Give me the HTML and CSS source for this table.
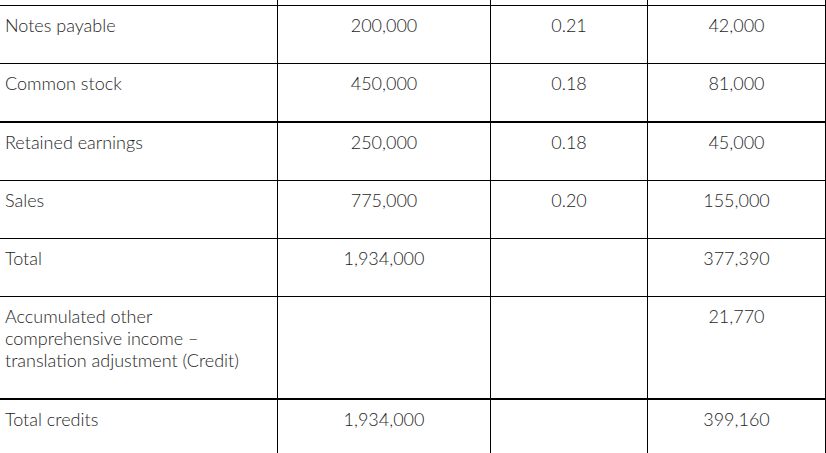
FILE: index.html
```html
<!DOCTYPE html>
<html lang="en">
<head>
<meta charset="utf-8">
<title>Translation worksheet</title>
<link rel="stylesheet" href="styles.css">
</head>
<body>
<table class="sheet">
  <colgroup>
    <col class="c1">
    <col class="c2">
    <col class="c3">
    <col class="c4">
  </colgroup>
  <tbody>
    <tr class="spacer"><td></td><td></td><td></td><td></td></tr>
    <tr><td class="label">Notes payable</td><td class="num">200,000</td><td class="num">0.21</td><td class="num">42,000</td></tr>
    <tr class="thick"><td class="label">Common stock</td><td class="num">450,000</td><td class="num">0.18</td><td class="num">81,000</td></tr>
    <tr><td class="label">Retained earnings</td><td class="num">250,000</td><td class="num">0.18</td><td class="num">45,000</td></tr>
    <tr><td class="label">Sales</td><td class="num">775,000</td><td class="num">0.20</td><td class="num">155,000</td></tr>
    <tr><td class="label">Total</td><td class="num">1,934,000</td><td class="num"></td><td class="num">377,390</td></tr>
    <tr class="thick"><td class="label">Accumulated other<br>comprehensive income –<br>translation adjustment (Credit)</td><td class="num"></td><td class="num"></td><td class="num">21,770</td></tr>
    <tr><td class="label">Total credits</td><td class="num">1,934,000</td><td class="num"></td><td class="num">399,160</td></tr>
  </tbody>
</table>
</body>
</html>
```
FILE: styles.css
```css
html, body {
  margin: 0;
  padding: 0;
  background: #ffffff;
}

.sheet {
  border-collapse: separate;
  border-spacing: 0;
  table-layout: fixed;
  width: 826px;
  font-family: Lato, "Liberation Sans", sans-serif;
  font-size: 18px;
  font-weight: 300;
  color: #1e1e1e;
}

.c1 { width: 278px; }
.c2 { width: 213px; }
.c3 { width: 157px; }
.c4 { width: 178px; }

.sheet td {
  box-sizing: border-box;
  vertical-align: top;
  padding: 8px 5px 27px 5px;
  line-height: 22px;
  border-right: 1px solid #000;
  border-bottom: 1px solid #000;
}

.sheet .thick td {
  border-bottom-width: 2px;
}

.sheet .spacer td {
  padding: 0;
  height: 6px;
  line-height: 0;
  font-size: 0;
}

.label {
  text-align: left;
}

.num {
  text-align: center;
}
```
